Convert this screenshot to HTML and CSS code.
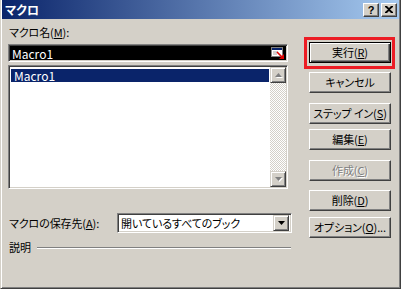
FILE: index.html
```html
<!DOCTYPE html>
<html lang="ja">
<head>
<meta charset="utf-8">
<title>マクロ</title>
<link rel="stylesheet" href="styles.css">
</head>
<body>
<div class="window">
  <div class="titlebar">
    <span class="title">マクロ</span>
    <div class="caption-btns">
      <span class="cbtn help">?</span>
      <span class="cbtn close"><svg width="8" height="7" viewBox="0 0 8 7"><path d="M0 0h2l2 2 2-2h2v1L5 3.5 8 6v1H6L4 5 2 7H0V6l3-2.5L0 1z" fill="#000"/></svg></span>
    </div>
  </div>
  <div class="content">
    <div class="left">
      <div class="label name-label">マクロ名(<u>M</u>):</div>
      <div class="textbox">
        <span class="tb-text">Macro1</span>
        <span class="refbtn"><svg width="14" height="13" viewBox="0 0 14 13"><rect x="0.5" y="0.5" width="11" height="9" fill="#fff" stroke="#808080"/><rect x="1" y="1" width="10" height="2" fill="#0a246a"/><path d="M2 5h5M2 7h4" stroke="#a0a0a0"/><path d="M6 5l5 5" stroke="#e00000" stroke-width="1.6"/><path d="M13 12H8l5-5z" fill="#e00000"/></svg></span>
      </div>
      <div class="listbox">
        <div class="list-items">
          <div class="item selected">Macro1</div>
        </div>
        <div class="vscroll">
          <div class="sbtn"><svg width="7" height="5" viewBox="0 0 7 5"><path d="M3.5 0L7 4H0z" fill="#808080"/></svg></div>
          <div class="track"></div>
          <div class="sbtn"><svg width="7" height="5" viewBox="0 0 7 5"><path d="M0 0h7L3.5 4z" fill="#808080"/></svg></div>
        </div>
      </div>
      <div class="combo-row">
        <span class="label">マクロの保存先(<u>A</u>):</span>
        <div class="combo">
          <span class="combo-text">開いているすべてのブック</span>
          <div class="dd"><svg width="7" height="4" viewBox="0 0 7 4"><path d="M0 0h7L3.5 4z" fill="#000"/></svg></div>
        </div>
      </div>
      <div class="desc-row">
        <span class="label">説明</span>
        <div class="etch"></div>
      </div>
    </div>
    <div class="right">
      <div class="btn default b-run">実行(<u>R</u>)</div>
      <div class="btn b-cancel">キャンセル</div>
      <div class="btn b-step">ステップ イン(<u>S</u>)</div>
      <div class="btn b-edit">編集(<u>E</u>)</div>
      <div class="btn disabled b-create">作成(<u>C</u>)</div>
      <div class="btn b-delete">削除(<u>D</u>)</div>
      <div class="btn b-options">オプション(<u>O</u>)...</div>
    </div>
  </div>
  <div class="highlight"></div>
</div>
</body>
</html>
```
FILE: styles.css
```css
html, body {
  margin: 0;
  padding: 0;
  background: #d4d0c8;
}
body {
  font-family: "Noto Sans CJK JP", "Liberation Sans", sans-serif;
  font-size: 11px;
  font-feature-settings: "palt";
  letter-spacing: -0.1px;
  color: #000;
}
.window {
  position: relative;
  width: 401px;
  height: 289px;
  box-sizing: border-box;
  background: #d4d0c8;
  border-left: 1px solid #d4d0c8;
  border-right: 1px solid #404040;
  border-bottom: 1px solid #404040;
  padding: 0 1px 1px 1px;
  box-shadow: inset 1px 0 #fff, inset -1px -1px #808080;
}
.titlebar {
  height: 19px;
  display: flex;
  align-items: center;
  justify-content: space-between;
  background: linear-gradient(to right, #0a246a, #a6caf0);
  padding: 0 2px 0 3px;
}
.title {
  color: #fff;
  font-weight: bold;
  font-size: 12px;
  line-height: 14px;
  letter-spacing: 0;
}
.caption-btns {
  display: flex;
  gap: 2px;
}
.cbtn {
  width: 16px;
  height: 14px;
  box-sizing: border-box;
  background: #d4d0c8;
  border: 1px solid;
  border-color: #fff #404040 #404040 #fff;
  box-shadow: inset -1px -1px #808080;
  display: flex;
  align-items: center;
  justify-content: center;
  font-family: "Liberation Sans", sans-serif;
  font-weight: bold;
  font-size: 11px;
  line-height: 12px;
  letter-spacing: 0;
}
.content {
  display: flex;
  padding-left: 6px;
}
.left {
  width: 284px;
  display: flex;
  flex-direction: column;
}
.label {
  line-height: 13px;
  white-space: nowrap;
}
.name-label {
  margin-top: 7px;
  height: 13px;
  padding-left: 1px;
}
.textbox {
  margin-top: 5px;
  width: 280px;
  height: 18px;
  box-sizing: border-box;
  border: 1px solid;
  border-color: #808080 #fff #fff #808080;
  box-shadow: inset 1px 1px #404040, inset -1px -1px #d4d0c8;
  background: #000;
  display: flex;
  align-items: center;
  padding: 0 2px 0 3px;
}
.tb-text {
  color: #fff;
  flex: 1;
  line-height: 13px;
  font-size: 12px;
  letter-spacing: 0;
}
.refbtn {
  width: 14px;
  height: 13px;
  display: flex;
}
.listbox {
  margin-top: 3px;
  width: 280px;
  height: 124px;
  box-sizing: border-box;
  border: 1px solid;
  border-color: #808080 #fff #fff #808080;
  box-shadow: inset 1px 1px #404040, inset -1px -1px #d4d0c8;
  background: #fff;
  display: flex;
  padding: 1px;
}
.list-items {
  flex: 1;
  padding: 2px 1px 0 1px;
}
.item {
  height: 13px;
  line-height: 13px;
  padding-left: 3px;
  font-size: 12px;
  letter-spacing: 0;
}
.item.selected {
  background: #0a246a;
  color: #fff;
}
.vscroll {
  width: 16px;
  display: flex;
  flex-direction: column;
}
.sbtn, .dd {
  width: 16px;
  height: 16px;
  box-sizing: border-box;
  background: #d4d0c8;
  border: 1px solid;
  border-color: #d4d0c8 #404040 #404040 #d4d0c8;
  box-shadow: inset 1px 1px #fff, inset -1px -1px #808080;
  display: flex;
  align-items: center;
  justify-content: center;
}
.sbtn svg {
  filter: drop-shadow(1px 1px 0 #fff);
}
.track {
  flex: 1;
  background: repeating-conic-gradient(#d4d0c8 0 25%, #fff 0 50%) 0 0 / 2px 2px;
}
.combo-row {
  margin-top: 24px;
  height: 20px;
  display: flex;
  align-items: center;
  padding-left: 1px;
}
.combo {
  margin-left: auto;
  width: 175px;
  height: 20px;
  box-sizing: border-box;
  border: 1px solid;
  border-color: #808080 #fff #fff #808080;
  box-shadow: inset 1px 1px #404040, inset -1px -1px #d4d0c8;
  background: #fff;
  display: flex;
  align-items: center;
  padding: 2px;
}
.combo-text {
  flex: 1;
  padding-left: 1px;
  line-height: 13px;
}
.desc-row {
  margin-top: 8px;
  height: 13px;
  display: flex;
  align-items: center;
  padding-left: 1px;
}
.etch {
  flex: 1;
  margin-left: 6px;
  margin-right: 1px;
  border-top: 1px solid #808080;
  border-bottom: 1px solid #fff;
}
.right {
  margin-left: 17px;
  width: 82px;
  display: flex;
  flex-direction: column;
}
.btn {
  height: 21px;
  box-sizing: border-box;
  background: #d4d0c8;
  border: 1px solid;
  border-color: #fff #404040 #404040 #fff;
  box-shadow: inset -1px -1px #808080;
  text-align: center;
  line-height: 19px;
  white-space: nowrap;
}
.btn.default {
  border: 1px solid #000;
  box-shadow: inset 1px 1px #fff, inset -1px -1px #404040, inset -2px -2px #808080;
}
.btn.disabled {
  color: #808080;
  text-shadow: 1px 1px 0 #fff;
}
.b-run { margin-top: 23px; }
.b-cancel { margin-top: 9px; }
.b-step { margin-top: 10px; }
.b-edit { margin-top: 5px; }
.b-create { margin-top: 10px; }
.b-delete { margin-top: 9px; }
.b-options { margin-top: 6px; }
.highlight {
  position: absolute;
  left: 303px;
  top: 37px;
  width: 91px;
  height: 32px;
  box-sizing: border-box;
  border: 3px solid #ec1c24;
}
```
